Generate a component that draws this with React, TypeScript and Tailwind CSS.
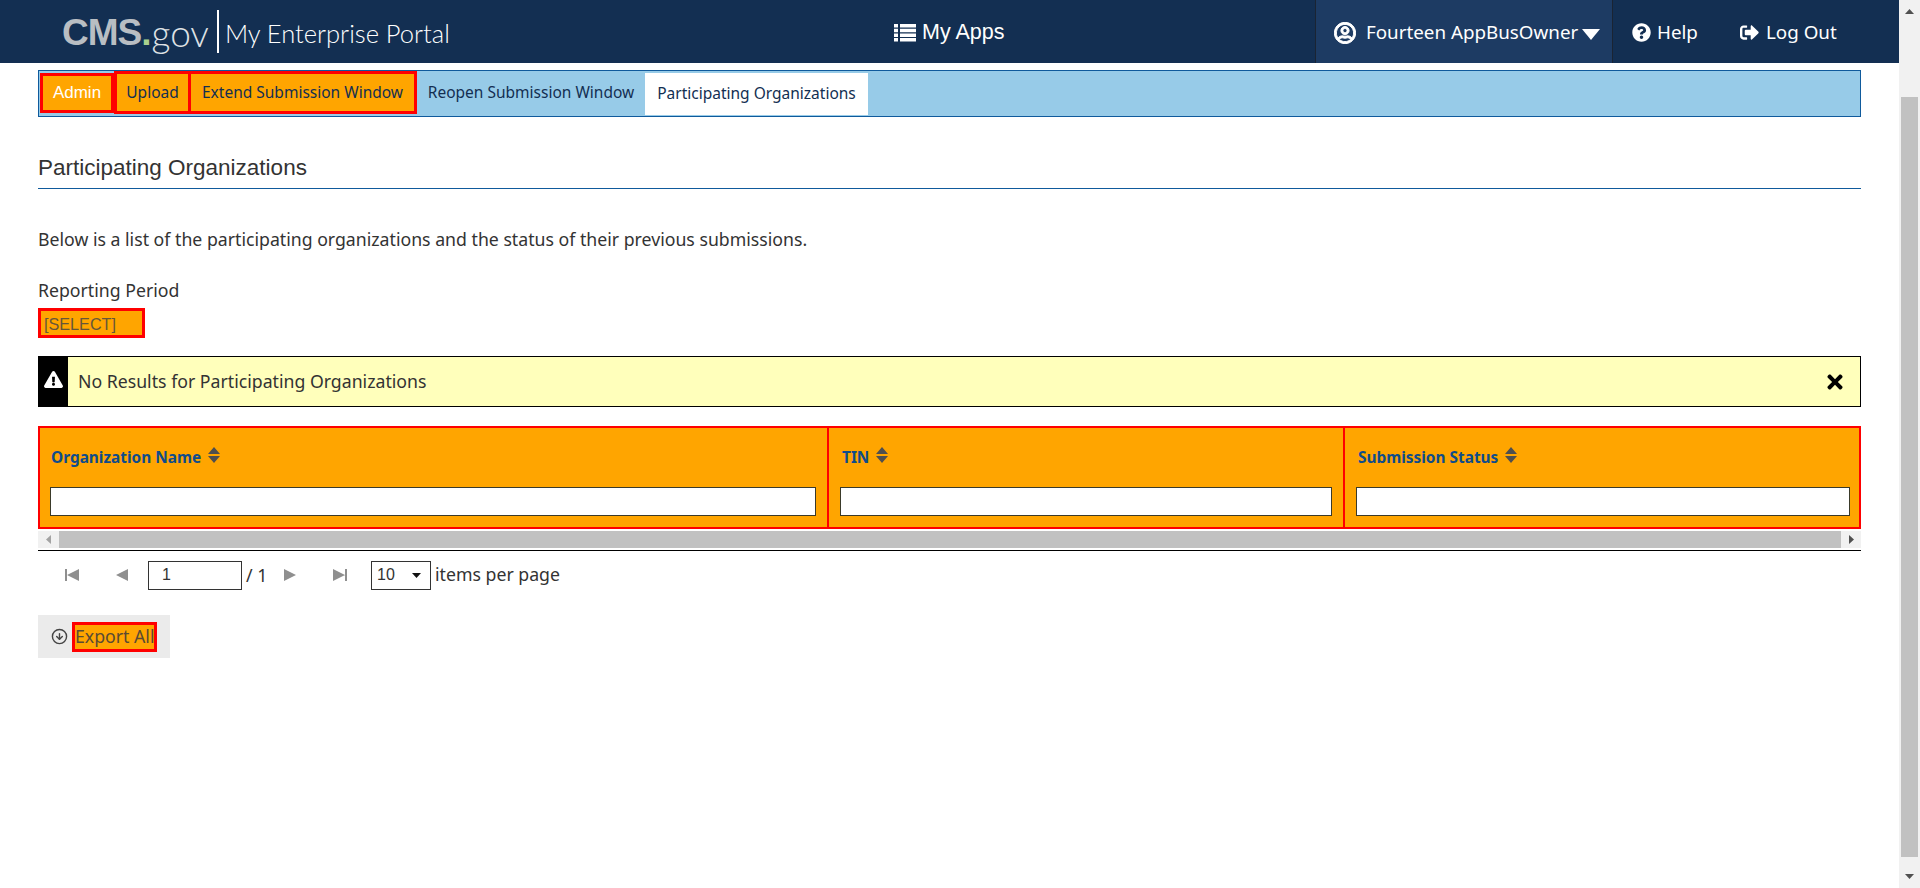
import { CircleArrowDown } from "lucide-react";
import { FaRegUserCircle, FaQuestionCircle, FaSignOutAlt, FaExclamationTriangle, FaTimes } from "react-icons/fa";

function SortIcon() {
  return (
    <svg width="12" height="16" viewBox="0 0 12 16" className="ml-[7px] -mt-[6px]">
      <path d="M6 0 L12 7 H0 Z M0 9 H12 L6 16 Z" fill="#4f4f4f" />
    </svg>
  );
}

function HeadCell({ name, className, titleClass, inputClass }: { name: string; className: string; titleClass: string; inputClass: string }) {
  return (
    <div className={`flex flex-col ${className}`}>
      <div className={`flex items-center h-[59px] pt-[1px] text-[15.4px] font-bold text-[#0f4c8a] ${titleClass}`}>
        <span>{name}</span>
        <SortIcon />
      </div>
      <div className={`h-[29px] bg-white border border-[#3a3a2a] ${inputClass}`} />
    </div>
  );
}

function Tri({ d }: { d: string }) {
  return (
    <svg width="16" height="16" viewBox="0 0 16 16">
      <path d={d} fill="#8f8f8f" />
    </svg>
  );
}

export default function App() {
  return (
    <div className="flex h-[888px] w-[1920px] overflow-hidden bg-white text-[#333] font-['Noto_Sans',sans-serif]">
      <div className="flex-1 min-w-0 flex flex-col">
        <header className="h-[63px] shrink-0 bg-[#132f52] flex items-center text-white text-[18.8px]">
          <div className="w-[460px] flex items-center pl-[62px] pt-[3px] font-['Lato',sans-serif]">
            <span className="text-[37px] font-bold text-[#b9bec3] tracking-[-1px] font-['Liberation_Sans',sans-serif]">CMS</span>
            <span className="text-[37px] font-bold text-[#a9d18e] font-['Liberation_Sans',sans-serif]">.</span>
            <span className="text-[37px] font-light text-[#dfe2e5]">gov</span>
            <span className="w-[2px] h-[43px] bg-white ml-[8px] mr-[6px] -mt-[3px]" />
            <span className="text-[25.5px] font-light text-white whitespace-nowrap">My Enterprise Portal</span>
          </div>
          <div className="w-[855px] flex items-center pl-[434px] pt-[2px] text-[21.5px] font-['Liberation_Sans',sans-serif]">
            <svg width="22" height="18" viewBox="0 0 22 18" className="mr-[6px]">
              <path d="M0 0H4V3.5H0ZM6 0H22V3.5H6ZM0 4.7H4V8.2H0ZM6 4.7H22V8.2H6ZM0 9.4H4V12.9H0ZM6 9.4H22V12.9H6ZM0 14.1H4V17.6H0ZM6 14.1H22V17.6H6Z" fill="#fff" />
            </svg>
            My Apps
          </div>
          <div className="w-[298px] h-full bg-[#1d3b63] border-x border-[#1a2433] flex items-center pl-[18px] pt-[2px]">
            <FaRegUserCircle size={22} stroke="currentColor" strokeWidth={22} className="mr-[10px]" />
            <span className="whitespace-nowrap">Fourteen AppBusOwner</span>
            <svg width="18" height="11" viewBox="0 0 18 11" className="ml-[4px] mt-[4px]"><path d="M0 0H18L9 11Z" fill="#fff" /></svg>
          </div>
          <div className="w-[127px] flex items-center pl-[19px] pt-[2px]">
            <FaQuestionCircle size={19} className="mr-[6px]" />Help
          </div>
          <div className="flex items-center pt-[2px]">
            <FaSignOutAlt size={19} className="mr-[7px]" />Log Out
          </div>
        </header>

        <main className="flex-1 pl-[38px] pr-[38px]">
          <nav className="mt-[7px] h-[47px] border border-[#0f5a9c] bg-[#97cbe8] flex items-start text-[15.5px] text-[#132f52]">
            <div className="mt-[2px] ml-[1px] w-[74px] h-[40px] border-[3px] border-[#ff0000] bg-[#ffa500] text-white text-[17px] flex items-center justify-center font-['Liberation_Sans',sans-serif]">Admin</div>
            <div className="w-[77px] h-[43px] border-[3px] border-[#ff0000] bg-[#ffa500] flex items-center justify-center">Upload</div>
            <div className="w-[226px] h-[43px] border-[3px] border-l-0 border-[#ff0000] bg-[#ffa500] flex items-center justify-center">Extend Submission Window</div>
            <div className="mt-[2px] w-[228px] h-[40px] flex items-center justify-center">Reopen Submission Window</div>
            <div className="mt-[2px] w-[223px] h-[42px] bg-white flex items-center justify-center">Participating Organizations</div>
          </nav>

          <h1 className="mt-[37px] pb-[7px] h-[35px] border-b border-[#0f5a9c] text-[22.5px] leading-[28px] text-[#333] font-['Liberation_Sans',sans-serif]">Participating Organizations</h1>

          <p className="mt-[38px] text-[17.7px] leading-[24px]">Below is a list of the participating organizations and the status of their previous submissions.</p>
          <p className="mt-[27px] text-[17.7px] leading-[24px]">Reporting Period</p>

          <div className="mt-[6px] w-[107px] h-[30px] border-[3px] border-[#ff0000] bg-[#ffa500] flex items-center pl-[3px] pt-[2px] text-[16.2px] text-[#66563a] font-['Liberation_Sans',sans-serif]">[SELECT]</div>

          <div className="mt-[18px] h-[51px] border border-black bg-[#ffffbb] flex items-center text-[17.7px]">
            <div className="w-[29px] h-full bg-black flex items-center justify-center">
              <FaExclamationTriangle size={19} className="text-white -mt-[4px]" />
            </div>
            <span className="ml-[10px] flex-1">No Results for Participating Organizations</span>
            <FaTimes size={22} className="text-black mr-[14px]" />
          </div>

          <div className="mt-[19px] h-[103px] border-2 border-[#ff0000] bg-[#ffa500] flex">
            <HeadCell name="Organization Name" className="w-[789px] border-r-2 border-[#ff0000]" titleClass="pl-[11px]" inputClass="ml-[10px] mr-[11px]" />
            <HeadCell name="TIN" className="w-[516px] border-r-2 border-[#ff0000]" titleClass="pl-[13px]" inputClass="ml-[11px] mr-[11px]" />
            <HeadCell name="Submission Status" className="flex-1" titleClass="pl-[13px]" inputClass="ml-[11px] mr-[9px]" />
          </div>

          <div className="mt-[2px] h-[17px] bg-[#f1f1f1] flex items-center">
            <div className="w-[21px] flex justify-center">
              <svg width="5" height="9" viewBox="0 0 5 9"><path d="M5 0V9L0 4.5Z" fill="#a3a3a3" /></svg>
            </div>
            <div className="flex-1 h-full bg-[#c1c1c1]" />
            <div className="w-[20px] flex justify-center">
              <svg width="5" height="9" viewBox="0 0 5 9"><path d="M0 0V9L5 4.5Z" fill="#505050" /></svg>
            </div>
          </div>
          <div className="mt-[2px] h-px bg-black" />

          <div className="mt-[9px] h-[30px] flex items-center text-[17.7px]">
            <div className="ml-[26px] w-[51px]"><Tri d="M1 2H3V14H1ZM15 2V14L3 8Z" /></div>
            <Tri d="M13 2V14L1 8Z" />
            <div className="ml-[17px] w-[94px] h-[29px] border border-[#333] flex items-center pl-[13px] text-[16px] font-['Liberation_Sans',sans-serif]">1</div>
            <span className="ml-[4px] w-[36px]">/ 1</span>
            <Tri d="M2 2V14L14 8Z" />
            <div className="ml-[34px]"><Tri d="M1 2V14L13 8ZM13 2H15V14H13Z" /></div>
            <div className="ml-[23px] w-[60px] h-[29px] border border-[#333] flex items-center justify-between pl-[5px] pr-[9px] text-[16px] font-['Liberation_Sans',sans-serif]">
              10
              <svg width="9" height="5" viewBox="0 0 9 5"><path d="M0 0H9L4.5 5Z" fill="#111" /></svg>
            </div>
            <span className="ml-[4px] pb-[2px]">items per page</span>
          </div>

          <div className="mt-[25px] w-[132px] h-[43px] bg-[#ebebeb] flex items-center pl-[13px]">
            <CircleArrowDown size={17} className="mr-[4px] text-[#444]" />
            <span className="h-[30px] w-[85px] border-[3px] border-[#ff0000] bg-[#ffa500] flex items-center text-[17.7px] text-[#5a4a34] whitespace-nowrap overflow-hidden">Export All</span>
          </div>
        </main>
      </div>

      <aside className="w-[21px] shrink-0 bg-[#f1f1f1] flex flex-col items-center">
        <div className="h-[23px] flex items-center">
          <svg width="9" height="5" viewBox="0 0 9 5"><path d="M4.5 0L9 5H0Z" fill="#505050" /></svg>
        </div>
        <div className="mt-[74px] w-[17px] h-[760px] bg-[#c1c1c1]" />
        <div className="h-[31px] w-full flex items-end justify-center pb-[9px] pt-[17px]">
          <svg width="9" height="5" viewBox="0 0 9 5"><path d="M0 0H9L4.5 5Z" fill="#505050" /></svg>
        </div>
      </aside>
    </div>
  );
}
